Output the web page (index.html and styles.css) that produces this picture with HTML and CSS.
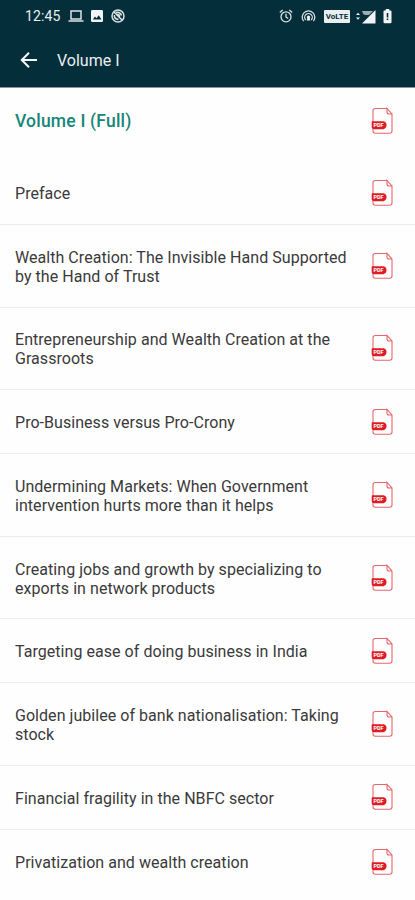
FILE: index.html
```
<!DOCTYPE html>
<html lang="en">
<head>
<meta charset="utf-8">
<title>Volume I</title>
<link rel="stylesheet" href="styles.css">
</head>
<body>
<svg class="defs" width="0" height="0" aria-hidden="true">
  <symbol id="pdf" viewBox="0 0 22 28">
    <path class="page" d="M16 1.5H4.3Q2 1.5 2 3.8V24Q2 26.2 4.3 26.2H18.7Q21 26.2 21 24V7L16 1.5V5Q16 7 18 7H21"/>
    <path class="label" d="M1 14.2H12.5Q15.5 14.7 15.5 18T12.5 22.2H3Q.7 22.2 .7 19.5V15Z"/>
  </symbol>
</svg>
<header class="top">
  <div class="status">
    <span class="clock">12:45</span>
    <svg class="laptop" width="16" height="14" viewBox="0 0 16 14"><path class="line" d="M3 2H13V10H3ZM.5 12H15.5"/></svg>
    <svg class="photo" width="12" height="12" viewBox="0 0 12 12"><rect class="solid" width="12" height="12" rx="1.3"/><path class="cut" d="M1.8 9.5 4 6.5 5.5 8.3 7.7 5.2 10.5 9.5Z"/></svg>
    <svg class="blocked" width="14" height="14" viewBox="0 0 14 14"><circle class="line" cx="7" cy="7" r="6"/><path class="line" d="M3 3 11.5 11.5M5 3.5Q9 2.5 10.5 6.5M3.4 6Q3 10 7.5 10.5M6 5.5Q8.5 5 8.5 8"/></svg>
    <span class="spacer"></span>
    <svg class="alarm" width="14" height="14" viewBox="0 0 14 14"><circle class="thin" cx="7" cy="7.8" r="5"/><path class="thin" d="M7 4.8V8L9.2 9.5M.8 3.5 3.7 1M13.2 3.5 10.3 1"/></svg>
    <svg class="hotspot" width="15" height="14" viewBox="0 0 15 14"><path class="thin" d="M2.6 12.2A6.3 6.3 0 1 1 12.4 12.2M4.8 11A3.8 3.8 0 1 1 10.2 11"/><path class="solid" d="M7.5 6.6A1.7 1.7 0 0 1 8.7 9.5L9.2 11.5H5.8L6.3 9.5A1.7 1.7 0 0 1 7.5 6.6Z"/></svg>
    <span class="volte">VoLTE</span>
    <svg class="signal" width="20" height="15" viewBox="0 0 20 15"><path class="solid" d="M0 6 2 3.8 4 6ZM0 8.5H4L2 10.7ZM19.5 1V14.5H6Z"/><path class="haze" d="M6 2H17L13 6H9Q6.5 5 6 2Z"/></svg>
    <svg class="battery" width="9" height="15" viewBox="0 0 9 15"><path class="solid" d="M2.7 0H6.3V1.5H7.5Q8.5 1.5 8.5 2.5V13Q8.5 14.2 7.5 14.2H1.5Q.5 14.2 .5 13V2.5Q.5 1.5 1.5 1.5H2.7Z"/><path class="cut" d="M3.7 4H5.3V8.5H3.7ZM3.7 9.5H5.3V11H3.7Z"/></svg>
  </div>
  <div class="appbar">
    <svg class="back" width="18" height="18" viewBox="0 0 18 18"><path d="M17 9H2M9 1.8 1.8 9 9 16.2"/></svg>
    <h1 class="title">Volume I</h1>
  </div>
</header>
<main class="list">
  <div class="row full"><span class="name">Volume I (Full)</span><span class="pdf"><svg><use href="#pdf"/></svg><span class="tag">PDF</span></span></div>
  <div class="row"><span class="name">Preface</span><span class="pdf"><svg><use href="#pdf"/></svg><span class="tag">PDF</span></span></div>
  <div class="row tall"><span class="name">Wealth Creation: The Invisible Hand Supported<br>by the Hand of Trust</span><span class="pdf"><svg><use href="#pdf"/></svg><span class="tag">PDF</span></span></div>
  <div class="row tall"><span class="name">Entrepreneurship and Wealth Creation at the<br>Grassroots</span><span class="pdf"><svg><use href="#pdf"/></svg><span class="tag">PDF</span></span></div>
  <div class="row"><span class="name">Pro-Business versus Pro-Crony</span><span class="pdf"><svg><use href="#pdf"/></svg><span class="tag">PDF</span></span></div>
  <div class="row tall"><span class="name">Undermining Markets: When Government<br>intervention hurts more than it helps</span><span class="pdf"><svg><use href="#pdf"/></svg><span class="tag">PDF</span></span></div>
  <div class="row tall"><span class="name">Creating jobs and growth by specializing to<br>exports in network products</span><span class="pdf"><svg><use href="#pdf"/></svg><span class="tag">PDF</span></span></div>
  <div class="row"><span class="name">Targeting ease of doing business in India</span><span class="pdf"><svg><use href="#pdf"/></svg><span class="tag">PDF</span></span></div>
  <div class="row tall"><span class="name">Golden jubilee of bank nationalisation: Taking<br>stock</span><span class="pdf"><svg><use href="#pdf"/></svg><span class="tag">PDF</span></span></div>
  <div class="row"><span class="name">Financial fragility in the NBFC sector</span><span class="pdf"><svg><use href="#pdf"/></svg><span class="tag">PDF</span></span></div>
  <div class="row last"><span class="name">Privatization and wealth creation</span><span class="pdf"><svg><use href="#pdf"/></svg><span class="tag">PDF</span></span></div>
</main>
</body>
</html>
```
FILE: styles.css
```
* { box-sizing: border-box; }
body { margin: 0; height: 900px; overflow: hidden; background: #fefefe; font-family: Roboto, sans-serif; color: #3a3a3a; }
.defs { position: absolute; }
.top { height: 88px; background: #052e3b; border-bottom: 1px solid #82969c; color: #e9eef0; }
.status { display: flex; align-items: center; height: 32px; padding: 0 23px 0 25px; }
.clock { width: 36px; font-size: 14px; letter-spacing: 0.1px; white-space: nowrap; }
.laptop { margin-left: 7px; }
.photo { margin-left: 7px; }
.blocked { margin-left: 8px; }
.spacer { flex: 1; }
.hotspot { margin-left: 8px; }
.volte { width: 26px; height: 13px; margin-left: 8px; border-radius: 1px; background: #e9eef0; color: #052e3b; font-size: 8px; font-weight: 700; line-height: 13px; text-align: center; }
.signal { margin-left: 6px; }
.battery { margin-left: 7px; }
.line { fill: none; stroke: #dce3e5; stroke-width: 1.5; }
.thin { fill: none; stroke: #dce3e5; stroke-width: 1.3; }
.solid { fill: #f1f4f5; }
.haze { fill: #9baeb4; }
.cut { fill: #052e3b; }
.appbar { display: flex; align-items: center; height: 56px; padding-left: 20px; }
.back { fill: none; stroke: #f5f7f8; stroke-width: 2; }
.title { margin: 0 0 0 19px; font-size: 16px; font-weight: 400; letter-spacing: 0; }
.row { display: flex; align-items: center; justify-content: space-between; height: 64px; padding: 0 22px 0 15px; border-bottom: 1px solid #ececec; }
.tall { height: 82.6px; }
.full { height: 73px; padding-bottom: 7px; border: 0; color: #168678; }
.last { border: 0; }
.name { padding-top: 2px; font-size: 16px; line-height: 19px; letter-spacing: 0.045px; white-space: nowrap; }
.full .name { padding-top: 0; font-size: 17.5px; font-weight: 500; letter-spacing: 0.2px; }
.pdf { position: relative; width: 22px; height: 28px; flex: none; }
.pdf svg { display: block; width: 22px; height: 28px; }
.page { fill: none; stroke: #e5666b; stroke-width: 1.1; }
.label { fill: #df1c24; }
.tag { position: absolute; left: 2.5px; top: 14px; font-size: 5.5px; font-weight: 700; line-height: 8px; color: #fff; }
```
